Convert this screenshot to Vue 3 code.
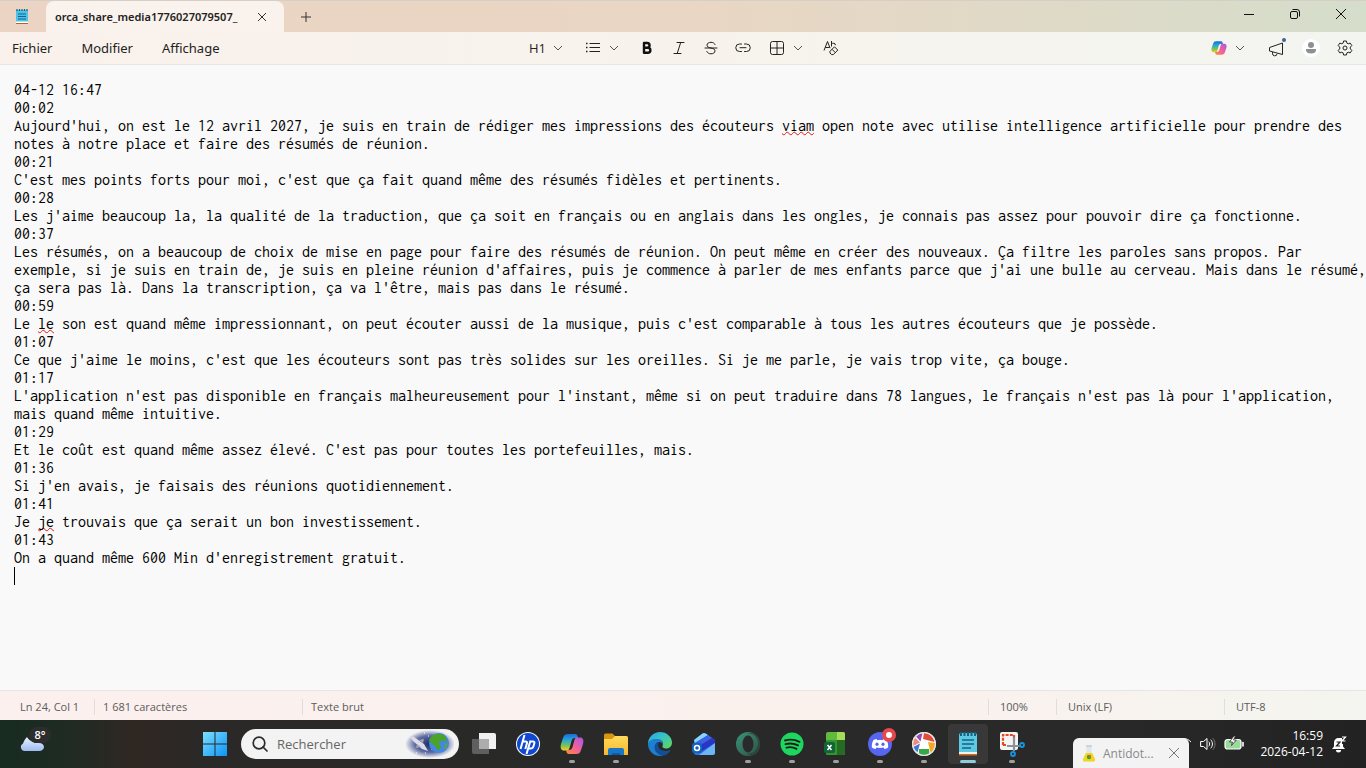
<template>
  <div class="desktop">
    <div class="window">
      <header class="titlebar">
        <div class="app-icon">
          <svg width="14" height="17" viewBox="0 0 14 17">
            <path d="M1 2h12v12H1z" fill="#4cc2e8" />
            <path d="M1 13.500h12V16H1z" fill="#fff" />
            <path d="M1 15h12v1H1z" fill="#b5622b" />
            <path d="M2 1v2M4.500 1v2M7 1v2M9.500 1v2M12 1v2" stroke="#155f83" stroke-width="1.200" />
            <path d="M3 6h8M3 8.500h8M3 11h8" stroke="#13678f" stroke-width="1" />
          </svg>
        </div>
        <div class="tab">
          <span class="tab-title">{{ fileName }}</span>
          <button class="tab-close" aria-label="Fermer l'onglet">
            <svg width="10" height="10" viewBox="0 0 10 10"><path d="M1 1l8 8M9 1l-8 8" stroke="#333" fill="none" /></svg>
          </button>
        </div>
        <button class="tab-add" aria-label="Nouvel onglet">
          <svg width="12" height="12" viewBox="0 0 12 12"><path d="M6 1v10M1 6h10" stroke="#333" fill="none" /></svg>
        </button>
        <div class="window-controls">
          <button aria-label="Réduire">
            <svg width="12" height="12" viewBox="0 0 12 12"><path d="M1 6.500h10" stroke="#111" /></svg>
          </button>
          <button aria-label="Restaurer">
            <svg width="12" height="12" viewBox="0 0 12 12" fill="none" stroke="#111">
              <rect x="1.500" y="3.500" width="7" height="7" rx="1.500" />
              <path d="M3.500 1.500H8a2.500 2.500 0 0 1 2.500 2.500v4.500" />
            </svg>
          </button>
          <button aria-label="Fermer">
            <svg width="12" height="12" viewBox="0 0 12 12"><path d="M1 1l10 10M11 1L1 11" stroke="#111" fill="none" /></svg>
          </button>
        </div>
      </header>

      <div class="menubar">
        <nav class="menus">
          <button v-for="menu in menus" :key="menu">{{ menu }}</button>
        </nav>
        <div class="format-tools">
          <button class="dropdown heading-btn" aria-label="Titres">
            <span>H1</span>
            <svg class="chevron" width="10" height="6" viewBox="0 0 10 6"><path d="M1 1l4 4 4-4" /></svg>
          </button>
          <button class="dropdown list-btn" aria-label="Listes">
            <svg width="16" height="16" viewBox="0 0 16 16" stroke="#222" fill="none">
              <path d="M4.500 3.500H15M4.500 7.500H15M4.500 11.500H15" />
              <path d="M1 3.500h1.500M1 7.500h1.500M1 11.500h1.500" stroke-width="1.500" />
            </svg>
            <svg class="chevron" width="10" height="6" viewBox="0 0 10 6"><path d="M1 1l4 4 4-4" /></svg>
          </button>
          <button class="tool" aria-label="Gras">
            <svg width="16" height="16" viewBox="0 0 16 16" fill="none" stroke="#111" stroke-width="2.400" stroke-linejoin="round">
              <path d="M5 3h3.200a2.300 2.300 0 0 1 0 4.700H5zM5 7.700h3.800a2.500 2.500 0 0 1 0 5.100H5z" />
            </svg>
          </button>
          <button class="tool" aria-label="Italique">
            <svg width="16" height="16" viewBox="0 0 16 16" fill="none" stroke="#222" stroke-linecap="round">
              <path d="M6 2.500h7M3 13.500h7M9.700 2.500l-3.500 11" />
            </svg>
          </button>
          <button class="tool" aria-label="Barré">
            <svg width="16" height="16" viewBox="0 0 16 16" fill="none" stroke="#222" stroke-linecap="round">
              <path d="M2 8h12M12 4.500C11.300 3 9.800 2.300 8 2.300c-2.300 0-4 1.100-4 2.900C4 6.800 5.400 7.500 8 8c2.700.6 4 1.300 4 2.900 0 1.800-1.600 2.900-4 2.900-2 0-3.500-.8-4.200-2.300" />
            </svg>
          </button>
          <button class="tool" aria-label="Lien">
            <svg width="16" height="16" viewBox="0 0 16 16" fill="none" stroke="#222" stroke-linecap="round">
              <path d="M6.500 4h-2a3.500 3.500 0 0 0 0 7.500h2M9.500 4h2a3.500 3.500 0 0 1 0 7.500h-2M5 7.700h6" />
            </svg>
          </button>
          <button class="dropdown table-btn" aria-label="Tableau">
            <svg width="16" height="16" viewBox="0 0 16 16" fill="none" stroke="#222">
              <rect x="1.500" y="1.500" width="13" height="13" rx="2" />
              <path d="M8 1.500v13M1.500 8h13" />
            </svg>
            <svg class="chevron" width="10" height="6" viewBox="0 0 10 6"><path d="M1 1l4 4 4-4" /></svg>
          </button>
          <button class="tool" aria-label="Effacer la mise en forme">
            <svg width="16" height="16" viewBox="0 0 16 16" fill="none" stroke="#222" stroke-linejoin="round">
              <path d="M1 10.500l3.500-9 2.600 6.700M2.300 7.500h4.200M8.500 1v5.500M8.500 4c1-1.300 4-1 4 1.200" />
              <path d="M7 11.300l4.500-4.500 3.300 3.300-4.500 4.500H8.500L7 13zM9 9.300l3.300 3.300" />
            </svg>
          </button>
        </div>
        <div class="right-tools">
          <button class="dropdown copilot-btn" aria-label="Copilot">
            <svg width="16" height="16" viewBox="0 0 24 24">
              <path d="M8 2h7c2 0 2.500 1.500 3 4h-3c-2 0-3 1-3.500 3L9.500 16C9 18 8 18.500 6 18.500H4C1 18.500 0 16 1 12l2-6c1-3 2-4 5-4z" fill="url(#cpA)" />
              <path d="M16 22H9c-2 0-2.500-1.500-3-4h3c2 0 3-1 3.500-3l2-7C15 6 16 5.500 18 5.500h2c3 0 4 2.500 3 6.500l-2 6c-1 3-2 4-5 4z" fill="url(#cpB)" />
            </svg>
            <svg class="chevron" width="10" height="6" viewBox="0 0 10 6"><path d="M1 1l4 4 4-4" /></svg>
          </button>
          <button class="tool" aria-label="Nouveautés">
            <svg width="18" height="20" viewBox="0 0 18 20" fill="none" stroke="#222" stroke-linejoin="round">
              <path d="M1.500 9.500L14.500 5v11.500L1.500 13zM4.500 14v1.200a2.300 2.300 0 0 0 4.600.6" />
              <circle cx="16" cy="2" r="2" fill="#3d6493" stroke="none" />
            </svg>
          </button>
          <button class="tool" aria-label="Compte">
            <svg width="18" height="18" viewBox="0 0 18 18">
              <circle cx="9" cy="9" r="9" fill="#fff" />
              <circle cx="9" cy="6" r="3" fill="#8f8f8f" />
              <path d="M4 10h10v1c0 2.500-2.200 3.500-5 3.500S4 13.500 4 11z" fill="#8f8f8f" />
            </svg>
          </button>
          <button class="tool" aria-label="Paramètres">
            <svg width="16" height="16" viewBox="0 0 16 16" fill="none" stroke="#222" stroke-linejoin="round">
              <path d="M6.600 1h2.800l.5 2.100 1.300.7 2-.7 1.600 2.500-1.500 1.500v1.800l1.500 1.500-1.600 2.500-2-.7-1.300.7-.5 2.100H6.600l-.5-2.100-1.300-.7-2 .7-1.600-2.500 1.500-1.500V7.100L1.200 5.600l1.600-2.500 2 .7 1.300-.7z" />
              <circle cx="8" cy="8" r="2" />
            </svg>
          </button>
        </div>
      </div>

      <main class="editor" contenteditable="true" role="textbox" aria-multiline="true" aria-label="Éditeur de texte" spellcheck="false">
        <p v-for="(line, i) in lines" :key="i"><span v-for="(part, j) in line" :key="j" :class="{ misspelled: j % 2 === 1 }">{{ part }}</span></p>
        <p><span class="caret"></span></p>
      </main>

      <footer class="statusbar">
        <span class="cell position">Ln 24, Col 1</span>
        <span class="cell count">1 681 caractères</span>
        <span class="cell kind">Texte brut</span>
        <span class="cell zoom">100%</span>
        <span class="cell eol">Unix (LF)</span>
        <span class="cell encoding">UTF-8</span>
      </footer>
    </div>

    <div class="taskbar">
      <button class="weather" aria-label="Météo">
        <svg width="26" height="20" viewBox="0 0 26 20">
          <path d="M5 17a4 4 0 0 1-1-7.500C5 7 6 5 8 3c1 2 3 4 8 6l4 0c3 0 5 2 5 4s-2 4-5 4z" fill="url(#cloud)" />
        </svg>
        <span class="temp">8°</span>
      </button>

      <button class="app start" aria-label="Démarrer">
        <svg width="24" height="24" viewBox="0 0 24 24" fill="url(#win)">
          <path d="M0 0h11.500v11.500H0zM12.500 0H24v11.500H12.500zM0 12.500h11.500V24H0zM12.500 12.500H24V24H12.500z" />
        </svg>
      </button>

      <label class="search">
        <svg width="16" height="16" viewBox="0 0 16 16" fill="none" stroke="#2b2b2b" stroke-width="1.700" stroke-linecap="round">
          <circle cx="7" cy="7" r="5.800" /><path d="M11 11l4 4" />
        </svg>
        <input type="text" placeholder="Rechercher" aria-label="Rechercher" />
        <svg class="search-art" width="50" height="28" viewBox="0 0 50 28">
          <ellipse cx="26" cy="14" rx="25" ry="14" fill="url(#space)" />
          <path d="M6 6l4 1 10 7 4 7-6-2L9 11z" fill="#dedbe6" />
          <path d="M13 14l-1 4 5-1zM15 10l5-1-1 4z" fill="#a8a6bb" />
          <path d="M24 6h1M20 3h1M27 19h1M12 23h1M21 23h1" stroke="#fff" />
          <circle cx="35" cy="13" r="10" fill="#4585e6" />
          <path d="M28 6c4-3 9-3 13 0l2 4-3 2-2-2-3 3 2 4-3 4-3-5-4-3-2-3z" fill="#4ba32a" />
          <path d="M41 14l3-1-2 6-2-1z" fill="#58aa31" />
        </svg>
      </label>

      <div class="apps">
        <button class="app" aria-label="Vue des tâches">
          <svg width="24" height="24" viewBox="0 0 24 24">
            <path d="M7 1h15a2 2 0 0 1 2 2v14H7z" fill="#f1f1f1" />
            <path d="M0 7h17v15H2a2 2 0 0 1-2-2z" fill="#5f5f5f" />
            <path d="M7 7h10v10H7z" fill="#adadad" />
          </svg>
        </button>
        <button class="app" aria-label="HP">
          <svg width="24" height="24" viewBox="0 0 24 24">
            <circle cx="12" cy="12" r="12" fill="#fff" />
            <circle cx="12" cy="12" r="11" fill="#1049d0" />
            <path d="M8.500 3L4.500 17M7 9.500h2.500c1.500 0 1.800.8 1.400 2L9.300 17M14.500 8.500L10.500 22M14.200 9.500h2.600c1.500 0 1.900.8 1.500 2l-1 3.200c-.4 1.200-1 1.700-2.300 1.700h-2.300" fill="none" stroke="#fff" stroke-width="2" />
          </svg>
        </button>
        <button class="app running" aria-label="Copilot">
          <svg width="24" height="24" viewBox="0 0 24 24">
            <path d="M8 2h7c2 0 2.500 1.500 3 4h-3c-2 0-3 1-3.500 3L9.500 16C9 18 8 18.500 6 18.500H4C1 18.500 0 16 1 12l2-6c1-3 2-4 5-4z" fill="url(#cpA)" />
            <path d="M16 22H9c-2 0-2.500-1.500-3-4h3c2 0 3-1 3.500-3l2-7C15 6 16 5.500 18 5.500h2c3 0 4 2.500 3 6.500l-2 6c-1 3-2 4-5 4z" fill="url(#cpB)" />
          </svg>
        </button>
        <button class="app running" aria-label="Explorateur de fichiers">
          <svg width="24" height="24" viewBox="0 0 24 24">
            <path d="M0 3a1.500 1.500 0 0 1 1.500-1.500h7L11 4h11a2 2 0 0 1 2 2v4H0z" fill="#d99411" />
            <path d="M0 7h8l3-3h11a2 2 0 0 1 2 2v17H0z" fill="url(#folder)" />
            <path d="M4 23v-5a2 2 0 0 1 2-2h12a2 2 0 0 1 2 2v5z" fill="#1677c8" />
            <path d="M8 23v-2h8v2z" fill="#0e5aa2" />
          </svg>
        </button>
        <button class="app" aria-label="Edge">
          <svg width="24" height="24" viewBox="0 0 24 24">
            <path d="M0 12C0 5 5.500 0 12 0s12 5 12 10.500c0 4-3 6-6 6-2.500 0-4-1-3.500-2.500 1.200-2 .5-6-4-6.500C6 7 1.500 8.500 0 12z" fill="url(#edgeA)" />
            <path d="M0 12c1-4 5-5.500 9-5 4 .4 6.200 3.300 5.700 6-.3-1.700-1.700-3-3.500-3-2.700 0-4.200 2.500-4.200 5 0 4 3.500 7.500 8.500 8.500C8.500 25.500 0 21 0 12z" fill="#1e7fd0" />
            <path d="M11.200 10c-2.700 0-4.700 2.500-4.700 5.500 0 4.500 4.500 8.500 9.500 8 3-.8 5.300-2.800 6.500-5 .2-.5-.3-.8-.8-.5-4.200 2-10.700.7-11.500-4-.3-1.500.2-3 1-4z" fill="#124f99" />
          </svg>
        </button>
        <button class="app" aria-label="Outlook">
          <svg width="24" height="24" viewBox="0 0 24 24">
            <path d="M2 8l8.500-6.500a2.500 2.500 0 0 1 3 0L23 8v12.500a2.500 2.500 0 0 1-2.500 2.500h-16A2.500 2.500 0 0 1 2 20.500z" fill="#2f6fe4" />
            <path d="M2 8l8.500-6.500a2.500 2.500 0 0 1 3 0L16 3 3 11z" fill="#8ad4fb" />
            <path d="M3 11L16 3l4 3L7 14z" fill="#3a62e6" />
            <path d="M7 14l13-8 3 2v3l-13 8z" fill="#2a35c4" />
            <path d="M23 11v9.500a2.500 2.500 0 0 1-2.500 2.500H7z" fill="#6cb6f8" />
            <rect x="0" y="11" width="10" height="10" rx="2" fill="#1261bd" />
            <circle cx="5" cy="16" r="2.500" fill="none" stroke="#fff" stroke-width="1.500" />
          </svg>
        </button>
        <button class="app running" aria-label="Opera">
          <svg width="24" height="24" viewBox="0 0 24 24">
            <circle cx="12" cy="12" r="12" fill="url(#opera)" />
            <path d="M10 2c9-2 13 5 12 11-1 5-5 9-11 9 9 4 13-3 13-10S19-1 10 2z" fill="#2b463d" />
            <ellipse cx="12" cy="12" rx="5.500" ry="8.500" fill="#292b2a" />
          </svg>
        </button>
        <button class="app running" aria-label="Spotify">
          <svg width="24" height="24" viewBox="0 0 24 24">
            <circle cx="12" cy="12" r="11.500" fill="#1ed760" />
            <path d="M5 8.500c5-1.600 10-1 14.500 1.300M5.500 12.200c4.500-1.300 8.500-.8 12.500 1.200M6.500 15.700c3.500-1 7-.5 10 1.200" fill="none" stroke="#162219" stroke-width="1.900" stroke-linecap="round" />
          </svg>
        </button>
        <button class="app running" aria-label="Excel">
          <svg width="24" height="24" viewBox="0 0 24 24">
            <path d="M4 0h15a2 2 0 0 1 2 2v19a2 2 0 0 1-2 2H4a2 2 0 0 1-2-2V2a2 2 0 0 1 2-2z" fill="#5fba3d" />
            <path d="M13 8h8v13a2 2 0 0 1-2 2h-6z" fill="#246c22" />
            <path d="M2 8h11v15H4a2 2 0 0 1-2-2z" fill="#35942e" />
            <path d="M13 0h6a2 2 0 0 1 2 2v6h-8z" fill="#a5db5b" />
            <rect x="0" y="10" width="11" height="11" rx="2" fill="#126439" />
            <path d="M3.500 13l4 5M7.500 13l-4 5" stroke="#fff" stroke-width="1.500" />
          </svg>
        </button>
        <button class="app running" aria-label="Discord">
          <svg width="24" height="24" viewBox="0 0 24 24">
            <circle cx="12" cy="12" r="12" fill="#5865f2" />
            <path d="M8.500 7l1 1.200c1.600-.3 3.400-.3 5 0l1-1.200c1.200.2 2.500.7 3.200 1.200 1.200 2.300 1.800 5 1.400 7.200-1 .9-2.200 1.400-3.600 1.700l-1-1.500c-2 .5-5 .5-7 0l-1 1.500c-1.400-.3-2.600-.8-3.600-1.700-.3-2.500.2-5 1.400-7.200C6 7.700 7.300 7.200 8.500 7z" fill="#fff" />
            <ellipse cx="9" cy="12.300" rx="1.600" ry="1.800" fill="#5865f2" /><ellipse cx="15" cy="12.300" rx="1.600" ry="1.800" fill="#5865f2" />
          </svg>
          <svg class="badge" width="14" height="14" viewBox="0 0 14 14">
            <circle cx="7" cy="7" r="7" fill="#e5484d" /><circle cx="7" cy="7" r="3" fill="#fff" />
          </svg>
        </button>
        <button class="app running" aria-label="Picasa">
          <svg width="24" height="24" viewBox="0 0 24 24">
            <circle cx="12" cy="12" r="12" fill="#fff" />
            <path d="M10.500 1A11 11 0 0 0 4 4.500L8.500 9.500z" fill="#944bb2" />
            <path d="M12 1c5 0 9.500 3.500 10.500 9L11 7z" fill="#e34c35" />
            <path d="M23 11c.5 4-1.500 8-4.500 10L16 10z" fill="#f5a91f" />
            <path d="M17.500 22C14 24 9 23.500 7 21.500V17h10z" fill="#36a848" />
            <path d="M3 5.500L8 10.500 1.200 14C.5 11 1.200 8 3 5.500z" fill="#f08b7c" />
            <path d="M5.500 20.500C2.500 18 1.700 17 1.200 15L8 11.500z" fill="#4376d8" />
            <circle cx="12" cy="12" r="11.300" fill="none" stroke="#e2e2e2" stroke-width="1.200" />
          </svg>
        </button>
        <button class="app active running" aria-label="Bloc-notes">
          <svg width="20" height="24" viewBox="0 0 20 24">
            <path d="M1 3a2 2 0 0 1 2-2h14a2 2 0 0 1 2 2v18H1z" fill="#5cc9e5" />
            <path d="M1 20h18v2H1z" fill="#f5f0e8" />
            <path d="M1 22h18v1.500H1z" fill="#c66c25" />
            <path d="M3 0v4M6.500 0v4M10 0v4M13.500 0v4M17 0v4" stroke="#176180" stroke-width="2" />
            <path d="M4 8h12M4 12h12M4 16h9" stroke="#176180" stroke-width="1.600" />
          </svg>
        </button>
        <button class="app running" aria-label="Outil Capture d'écran">
          <svg width="26" height="26" viewBox="0 0 26 26">
            <rect x="1" y="1" width="18" height="18" rx="2" fill="#f4f4f4" />
            <path d="M4 14V4h11v3M4 14h4" fill="none" stroke="#e04a1d" stroke-width="2.200" stroke-dasharray="3 1.200" />
            <path d="M15 6v14M8 15h14" stroke="#8b9299" stroke-width="2.200" />
            <circle cx="23" cy="14" r="2" fill="none" stroke="#1794df" stroke-width="1.800" />
            <circle cx="14" cy="23" r="2" fill="none" stroke="#1794df" stroke-width="1.800" />
          </svg>
        </button>
      </div>

      <div class="tray">
        <svg class="wifi" width="16" height="14" viewBox="0 0 16 14" fill="none" stroke="#fff">
          <path d="M1 5c4-4.500 10-4.500 14 0M3.500 8c3-3 6-3 9 0" />
        </svg>
        <button aria-label="Volume">
          <svg width="16" height="16" viewBox="0 0 16 16" fill="none" stroke="#fff" stroke-linejoin="round" stroke-linecap="round">
            <path d="M1 5.500h2.500L7 2.500v11l-3.500-3H1zM9 6c1 1.200 1 2.800 0 4M11 4c2 2.300 2 5.700 0 8" />
            <path d="M13 2.500c2.800 3 2.800 8 0 11" stroke="#777" />
          </svg>
        </button>
        <button aria-label="Batterie">
          <svg width="20" height="16" viewBox="0 0 20 16">
            <rect x="1" y="3.500" width="16" height="9.500" rx="2.500" fill="#9adb9c" stroke="#fff" stroke-width="1.200" />
            <path d="M19 6.500v3.500" stroke="#fff" stroke-width="1.600" stroke-linecap="round" />
            <path d="M9.800 0L5.500 6h3L7.500 9.500l4.800-5.500H9.500L11.500 0z" fill="#fff" stroke="#2a2a2a" stroke-width=".8" />
          </svg>
        </button>
        <button class="clock">
          <span>16:59</span>
          <span>2026-04-12</span>
        </button>
        <button aria-label="Notifications">
          <svg width="16" height="18" viewBox="0 0 16 18">
            <path d="M7 3a5 5 0 0 0-4 5v3.500L1 14h13l-2-2.500V9h-1V3z" fill="#fff" />
            <path d="M5 15a2.500 2.500 0 0 0 5 0z" fill="#fff" />
            <path d="M5.500 7H9l-3.500 4H9" fill="none" stroke="#222" stroke-width="1.200" />
            <path d="M11 2h3.500L11 6h3.500" fill="none" stroke="#fff" stroke-width="1.200" />
          </svg>
        </button>
      </div>

      <div class="preview">
        <svg width="14" height="17" viewBox="0 0 14 17">
          <path d="M4.500 1.500v5L1 14c-.5 1.500.3 2.500 1.500 2.500h9c1.200 0 2-1 1.500-2.500L9.500 6.500v-5z" fill="#dfe7ed" />
          <path d="M4 8h6l3 6c.5 1.500-.3 2.500-1.500 2.500h-9C1.300 16.500.5 15.500 1 14z" fill="#f3d51c" />
          <circle cx="7" cy="12" r="2.200" fill="#35a444" /><path d="M6 10h3v3z" fill="#e76524" />
          <path d="M4 1h6" stroke="#a6b9c6" />
        </svg>
        <span>Antidot...</span>
        <button aria-label="Fermer l'aperçu">
          <svg width="12" height="12" viewBox="0 0 12 12"><path d="M1 1l10 10M11 1L1 11" stroke="#777" fill="none" /></svg>
        </button>
      </div>
    </div>

    <svg class="defs" width="0" height="0" aria-hidden="true">
      <defs>
        <linearGradient id="cpA" x1="0" y1="0" x2="0" y2="1">
          <stop offset="0" stop-color="#1a6bd8" /><stop offset=".35" stop-color="#24a6dc" />
          <stop offset=".7" stop-color="#7cc255" /><stop offset="1" stop-color="#f5cf25" />
        </linearGradient>
        <linearGradient id="cpB" x1="1" y1="0" x2="0" y2="1">
          <stop offset="0" stop-color="#a457e8" /><stop offset=".5" stop-color="#f0619c" /><stop offset="1" stop-color="#fb8b35" />
        </linearGradient>
        <linearGradient id="win" x1="0" y1="0" x2="1" y2="1">
          <stop offset="0" stop-color="#7be0ff" /><stop offset="1" stop-color="#0c93f5" />
        </linearGradient>
        <linearGradient id="cloud" x1="0" y1="0" x2="0" y2="1">
          <stop offset="0" stop-color="#eaf2ff" /><stop offset="1" stop-color="#9dbcf0" />
        </linearGradient>
        <linearGradient id="folder" x1="0" y1="0" x2="0" y2="1">
          <stop offset="0" stop-color="#ffda5c" /><stop offset="1" stop-color="#f5b92c" />
        </linearGradient>
        <linearGradient id="edgeA" x1="0" y1="0" x2="1" y2="1">
          <stop offset="0" stop-color="#2b9fe0" /><stop offset=".4" stop-color="#34c1cd" /><stop offset="1" stop-color="#65d954" />
        </linearGradient>
        <linearGradient id="opera" x1="0" y1="0" x2="1" y2="1">
          <stop offset="0" stop-color="#3b9479" /><stop offset="1" stop-color="#304e45" />
        </linearGradient>
        <radialGradient id="space">
          <stop offset="0" stop-color="#1d2c66" /><stop offset=".6" stop-color="#5d6ca2" /><stop offset="1" stop-color="#f3f3f3" />
        </radialGradient>
      </defs>
    </svg>
  </div>
</template>

<script setup>
import { ref } from 'vue'

const fileName = ref('orca_share_media1776027079507_')
const menus = ['Fichier', 'Modifier', 'Affichage']

// every second part of a line is a misspelled word
const lines = ref([
  ['04-12 16:47'],
  ['00:02'],
  ["Aujourd'hui, on est le 12 avril 2027, je suis en train de rédiger mes impressions des écouteurs ", 'viam', ' open note avec utilise intelligence artificielle pour prendre des notes à notre place et faire des résumés de réunion.'],
  ['00:21'],
  ["C'est mes points forts pour moi, c'est que ça fait quand même des résumés fidèles et pertinents."],
  ['00:28'],
  ["Les j'aime beaucoup la, la qualité de la traduction, que ça soit en français ou en anglais dans les ongles, je connais pas assez pour pouvoir dire ça fonctionne."],
  ['00:37'],
  ["Les résumés, on a beaucoup de choix de mise en page pour faire des résumés de réunion. On peut même en créer des nouveaux. Ça filtre les paroles sans propos. Par exemple, si je suis en train de, je suis en pleine réunion d'affaires, puis je commence à parler de mes enfants parce que j'ai une bulle au cerveau. Mais dans le résumé, ça sera pas là. Dans la transcription, ça va l'être, mais pas dans le résumé."],
  ['00:59'],
  ['Le ', 'le', " son est quand même impressionnant, on peut écouter aussi de la musique, puis c'est comparable à tous les autres écouteurs que je possède."],
  ['01:07'],
  ["Ce que j'aime le moins, c'est que les écouteurs sont pas très solides sur les oreilles. Si je me parle, je vais trop vite, ça bouge."],
  ['01:17'],
  ["L'application n'est pas disponible en français malheureusement pour l'instant, même si on peut traduire dans 78 langues, le français n'est pas là pour l'application, mais quand même intuitive."],
  ['01:29'],
  ["Et le coût est quand même assez élevé. C'est pas pour toutes les portefeuilles, mais."],
  ['01:36'],
  ["Si j'en avais, je faisais des réunions quotidiennement."],
  ['01:41'],
  ['Je ', 'je', ' trouvais que ça serait un bon investissement.'],
  ['01:43'],
  ["On a quand même 600 Min d'enregistrement gratuit."]
])
</script>

<style>
body {
  margin: 0;
}
</style>

<style scoped>
.desktop {
  min-height: 100vh;
  display: flex;
  flex-direction: column;
  font-family: "Open Sans", "Noto Sans", sans-serif;
  font-size: 13px;
  color: #222;
}

button {
  display: flex;
  align-items: center;
  justify-content: center;
  padding: 0;
  border: none;
  background: none;
  font: inherit;
  color: inherit;
}

svg {
  display: block;
  flex-shrink: 0;
}

.defs {
  position: absolute;
}

.window {
  flex: 1;
  display: flex;
  flex-direction: column;
  background: #f9f9f9;
}

.titlebar {
  display: flex;
  height: 32px;
  box-sizing: border-box;
  border-top: 1px solid #d5cfc8;
  background: linear-gradient(90deg, #ebd4c3, #ead6c4 50%, #dedac8 80%, #d5decb);
}

.app-icon {
  width: 46px;
  display: flex;
  align-items: center;
  justify-content: center;
  box-sizing: border-box;
  padding-right: 2px;
}

.tab {
  width: 238px;
  display: flex;
  align-items: center;
  justify-content: space-between;
  box-sizing: border-box;
  padding: 0 12px 0 9px;
  border-radius: 8px 8px 0 0;
  background: #f9f2ed;
}

.tab-title {
  font-family: "Noto Sans", "Open Sans", sans-serif;
  font-size: 11px;
  font-weight: 600;
  color: #222;
}

.tab-close {
  width: 20px;
  height: 20px;
}

.tab-add {
  width: 44px;
}

.window-controls {
  display: flex;
  margin-left: auto;
  padding-right: 2px;
}

.window-controls button {
  width: 46px;
  height: 26px;
}

.menubar {
  display: grid;
  grid-template-columns: 1fr auto 1fr;
  align-items: center;
  height: 33px;
  box-sizing: border-box;
  border-bottom: 1px solid #e9e5e1;
  background: linear-gradient(90deg, #faf1ec, #f7f3ec 50%, #f3f5f0);
}

.menus {
  display: flex;
  gap: 29px;
  padding-left: 12px;
  font-family: "Noto Sans", "Open Sans", sans-serif;
}

.format-tools,
.right-tools {
  display: flex;
  align-items: center;
}

.format-tools {
  padding-left: 6px;
}

.dropdown {
  width: 42px;
  height: 28px;
  justify-content: space-between;
  box-sizing: border-box;
  padding: 0 4px;
}

.chevron {
  fill: none;
  stroke: #555;
}

.tool {
  width: 32px;
  height: 28px;
}

.list-btn {
  margin: 0 8px 0 14px;
}

.table-btn {
  margin: 0 8px 0 6px;
}

.right-tools {
  justify-content: flex-end;
  gap: 2px;
  padding-right: 5px;
}

.copilot-btn {
  margin-right: 10px;
}

.editor {
  flex: 1;
  padding: 16px 0 16px 14px;
  outline: none;
  font-family: Consolas, Inconsolata, "Noto Sans Mono CJK JP", "Liberation Mono", monospace;
  font-size: 16px;
  line-height: 18px;
  color: #000;
}

.editor p {
  margin: 0;
}

.misspelled {
  text-decoration: underline wavy #e51414 1px;
  text-decoration-skip-ink: none;
  text-underline-offset: 0;
}

.caret {
  display: block;
  width: 1px;
  height: 18px;
  background: #000;
}

.statusbar {
  display: flex;
  align-items: center;
  height: 30px;
  box-sizing: border-box;
  padding-top: 2px;
  border-top: 1px solid #e8e4e2;
  background: linear-gradient(90deg, #fbf0ee, #faf1ed 70%, #f4f5f0);
  font-size: 11px;
  color: #5c5c5c;
}

.cell {
  height: 16px;
  line-height: 16px;
  box-sizing: border-box;
  padding-left: 8px;
  border-right: 1px solid #e3dcd9;
}

.position {
  width: 95px;
  padding-left: 20px;
}

.count {
  width: 208px;
}

.kind {
  flex: 1;
}

.zoom {
  width: 68px;
  padding-left: 11px;
}

.eol {
  width: 168px;
  padding-left: 11px;
}

.encoding {
  width: 141px;
  padding-left: 11px;
  border-right: none;
}

.taskbar {
  position: relative;
  display: flex;
  align-items: center;
  height: 48px;
  background: linear-gradient(90deg, #182c21, #1f2b23 5%, #302723 10%, #2a2928 15%, #292929 80%, #222);
}

.weather {
  position: relative;
  width: 193px;
  height: 48px;
  justify-content: flex-start;
  padding-left: 19px;
}

.temp {
  position: absolute;
  left: 29px;
  top: 7px;
  width: 22px;
  height: 16px;
  border-radius: 8px;
  background: #2d2d2d;
  color: #fff;
  font-size: 11px;
  font-weight: 600;
  line-height: 16px;
  text-align: center;
}

.app {
  position: relative;
  width: 44px;
  height: 48px;
}

.app.running::after {
  content: "";
  position: absolute;
  left: 19px;
  bottom: 5px;
  width: 6px;
  height: 3px;
  border-radius: 2px;
  background: #a0a0a0;
}

.app.active::before {
  content: "";
  position: absolute;
  inset: 4px 2px;
  border-radius: 4px;
  background: #383838;
}

.app.active svg {
  position: relative;
}

.app.active::after {
  left: 14px;
  width: 16px;
  background: #8ecbdf;
}

.badge {
  position: absolute;
  left: 24px;
  top: 8px;
}

.search {
  display: flex;
  align-items: center;
  width: 218px;
  height: 30px;
  box-sizing: border-box;
  margin: 0 3px 0 4px;
  padding: 0 5px 0 11px;
  border-radius: 15px;
  background: #f3f3f3;
}

.search input {
  flex: 1;
  min-width: 0;
  padding: 0 0 0 9px;
  border: none;
  outline: none;
  background: none;
  font: inherit;
}

.search input::placeholder {
  color: #666;
  opacity: 1;
}

.apps {
  display: flex;
}

.tray {
  display: flex;
  align-items: center;
  gap: 8px;
  margin-left: auto;
  padding-right: 19px;
  color: #fff;
}

.clock {
  flex-direction: column;
  align-items: flex-end;
  margin-left: 8px;
  font-size: 12px;
  line-height: 16px;
}

.preview {
  position: absolute;
  right: 177px;
  bottom: 0;
  display: flex;
  align-items: center;
  width: 116px;
  height: 30px;
  box-sizing: border-box;
  padding: 0 9px;
  border-radius: 6px 6px 0 0;
  background: #f3f3f3;
  color: #8a8a8a;
  font-size: 12px;
}

.preview span {
  flex: 1;
  padding-left: 7px;
}
</style>
